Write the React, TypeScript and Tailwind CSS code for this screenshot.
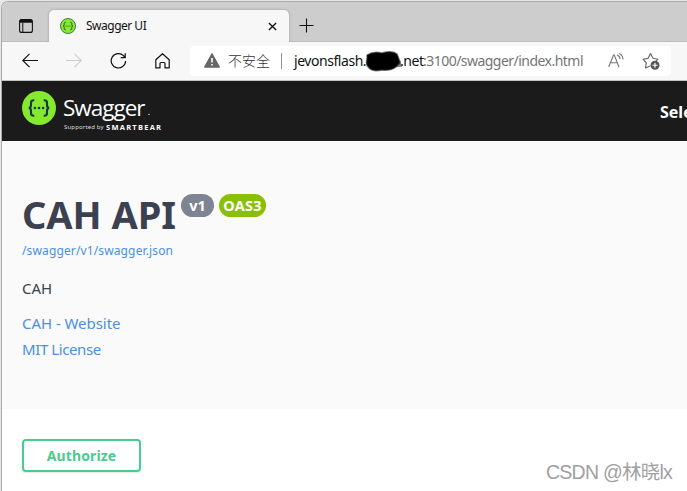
import React from 'react';

function SwaggerMark({ className, ring, ink }: { className: string; ring?: string; ink: string }) {
  return (
    <svg className={className} viewBox="0 0 34 34" fill="none">
      <circle cx="17" cy="17" r={ring ? 16 : 17} fill="#85ea2d" stroke={ring} strokeWidth={ring ? 2 : 0} />
      <path
        d="M12.3 9.2h-.8c-1.9 0-2.5.9-2.5 2.7v2.2c0 1.8-.6 2.8-2.2 2.9 1.6.1 2.2 1.1 2.2 2.9v2.2c0 1.8.6 2.7 2.5 2.7h.8M21.7 9.2h.8c1.9 0 2.5.9 2.5 2.7v2.2c0 1.8.6 2.8 2.2 2.9-1.6.1-2.2 1.1-2.2 2.9v2.2c0 1.8-.6 2.7-2.5 2.7h-.8"
        stroke={ink}
        strokeWidth="2.1"
      />
      <circle cx="12.9" cy="17" r="1.3" fill={ink} />
      <circle cx="17" cy="17" r="1.3" fill={ink} />
      <circle cx="21.1" cy="17" r="1.3" fill={ink} />
    </svg>
  );
}

function TabStrip() {
  return (
    <div className="flex h-[40px] shrink-0 bg-[#cdcdcd]">
      <div className="flex w-[47px] justify-center border-b border-[#bdbdbd] pt-[17px]">
        <svg className="h-[14px] w-[14px]" viewBox="0 0 14 14" fill="none" stroke="#111">
          <rect x=".6" y=".6" width="12.8" height="12.8" rx="2" strokeWidth="1.1" />
          <path d="M1 2.3h12" strokeWidth="3" />
          <path d="M3.8 3.5v10" />
        </svg>
      </div>
      <div className="mt-[8px] flex w-[240px] items-center rounded-t-[5px] bg-[#f7f7f7] shadow-[0_0_3px_rgba(0,0,0,0.25)] [clip-path:inset(-4px_-4px_0_-4px)]">
        <SwaggerMark className="ml-[11px] h-4 w-4" ring="#40734f" ink="#24513a" />
        <span className="ml-[10px] text-[12px] tracking-[-0.5px] text-[#111]">Swagger UI</span>
        <svg className="ml-auto mr-[12px] mt-px h-[9px] w-[9px]" viewBox="0 0 10 10" stroke="#111" strokeWidth="1.5">
          <path d="M1 1l8 8M9 1L1 9" />
        </svg>
      </div>
      <div className="flex flex-1 border-b border-[#bdbdbd] pl-[10px] pt-[16px]">
        <svg className="h-[15px] w-[15px]" viewBox="0 0 15 15" stroke="#111" strokeWidth="1.1">
          <path d="M.5 7.5h14M7.5.5v14" />
        </svg>
      </div>
    </div>
  );
}

function Toolbar() {
  return (
    <div className="flex h-[39px] shrink-0 border-b border-[#c4c4c4] bg-[#f7f7f7] text-[14px] leading-[30px]">
      <svg className="ml-[20px] mt-[11px] h-4 w-4 shrink-0" viewBox="0 0 16 16" fill="none" stroke="#111" strokeWidth="1.15">
        <path d="M16 7.5H.8M7.5.8L.8 7.5l6.7 6.7" />
      </svg>
      <svg className="ml-[28px] mt-[11px] h-4 w-4 shrink-0" viewBox="0 0 16 16" fill="none" stroke="#cecece" strokeWidth="1.15">
        <path d="M0 7.5h15.2M8.5.8l6.7 6.7-6.7 6.7" />
      </svg>
      <svg className="ml-[28px] mt-[10px] h-[18px] w-[17px] shrink-0" viewBox="0 0 17 18" fill="none" stroke="#111" strokeWidth="1.2">
        <path d="M15.6 9a7.2 7.2 0 1 1-2.1-5.3l1.7 1.6M15.2 1.2v4.4h-4.5" />
      </svg>
      <svg className="ml-[28px] mt-[11px] h-4 w-[15px] shrink-0" viewBox="0 0 15 16" fill="none" stroke="#111" strokeWidth="1.2" strokeLinejoin="round">
        <path d="M.8 6.7L7.5.7l6.7 6v8.2H10v-4.4c0-.6-.4-1-1-1H6c-.6 0-1 .4-1 1v4.4H.8z" />
      </svg>
      <div className="ml-[20px] mt-[4px] flex h-[30px] w-[481px] shrink-0 rounded-[4px] bg-white">
        <svg className="ml-[14px] mt-[7px] h-[15px] w-4 shrink-0" viewBox="0 0 16 15">
          <path d="M8 .7L15.3 14H.7z" fill="#666" stroke="#666" strokeWidth="1.3" strokeLinejoin="round" />
          <path d="M8 5v4.6M8 11v1.6" stroke="#fff" strokeWidth="1.6" />
        </svg>
        <span className="ml-[8px] w-[42px] whitespace-nowrap font-['Noto_Sans_CJK_SC',sans-serif] font-light leading-[28px] text-[#333]">不安全</span>
        <span className="ml-[11px] mt-[7px] h-4 w-px shrink-0 bg-[#909090]" />
        <span className="relative ml-[12px] w-[129px] shrink-0 whitespace-nowrap tracking-[-0.45px] text-[#111]">
          jevonsflash.f
          <svg className="absolute left-[71px] top-[4px] h-[23px] w-[38px]" viewBox="0 0 38 23">
            <path d="M30 17l5-8 2 8z" fill="#888" />
            <path d="M2 5Q8 1 17 3Q27 0 32 4Q34 8 35 13L31 17Q26 21 17 20Q8 22 4 18Q0 14 2 9z" fill="#000" stroke="#333" strokeOpacity=".6" strokeWidth="1.5" />
          </svg>
          <span className="absolute left-[106px] top-0 tracking-[-0.45px]">.net</span>
        </span>
        <span className="w-[160px] shrink-0 whitespace-nowrap tracking-[-0.53px] text-[#757575]">:3100/swagger/index.html</span>
        <svg className="ml-[25px] mt-[7px] h-4 w-4 shrink-0" viewBox="0 0 16 16" fill="none" stroke="#777" strokeWidth="1.1">
          <path d="M.7 14L5.5 2h.8L11 14M2.5 9.7h6.8M9 2q3 1.3 3 4M11.2.4Q15 2.3 15 6.6" />
        </svg>
        <svg className="ml-[18px] mt-[6px] h-[18px] w-[18px] shrink-0" viewBox="0 0 18 18" fill="none" stroke="#666" strokeWidth="1.15">
          <path d="M8 14L3.5 16l.8-5.2L1 7.2l5-.8L8.5 1.5 11 6.3l5 .9-2 2" strokeLinejoin="round" />
          <circle cx="13" cy="13.2" r="4.5" fill="#555" stroke="none" />
          <path d="M10.5 13.2h5M13 10.7v5" stroke="#fff" />
        </svg>
      </div>
    </div>
  );
}

function SwaggerHeader() {
  return (
    <div className="flex h-[60px] shrink-0 bg-[#1b1b1b] text-white">
      <SwaggerMark className="ml-[20px] mt-[10px] h-[34px] w-[34px] shrink-0" ink="#173647" />
      <div className="ml-[7px] w-[111px] whitespace-nowrap">
        <div className="mt-[13px] flex h-[27px] items-center">
          <span className="font-['Open_Sans',sans-serif] text-[22.5px] leading-[27px] tracking-[-1px]">Swagger</span>
          <span className="ml-[3px] mt-[13px] h-px w-[2px] bg-[#999]" />
        </div>
        <div className="mt-px flex h-[10px] items-center pl-px leading-[10px]">
          <span className="w-[42px] text-[6px] tracking-[0.15px] text-[#ddd]">Supported by</span>
          <span className="font-['Open_Sans',sans-serif] text-[7.5px] font-bold tracking-[1.25px]">SMARTBEAR</span>
        </div>
      </div>
      <span className="ml-auto mt-[19px] w-[27px] whitespace-nowrap text-[16px] font-bold leading-6">Sele</span>
    </div>
  );
}

function ApiInfo() {
  return (
    <div className="flex h-[268px] shrink-0 flex-col bg-[#fafafa] pl-[20px] text-[14px] text-[#3b4151]">
      <div className="mt-[52px] flex h-[48px] whitespace-nowrap font-bold">
        <h1 className="w-[155px] text-[38px] leading-[43px] tracking-[-0.05px]">CAH API</h1>
        <span className="ml-[4px] mt-px flex h-[23px] w-[33px] items-center justify-center rounded-full bg-[#7d8492] text-[14.5px] text-white">v1</span>
        <span className="ml-[5px] mt-px flex h-[23px] w-[47px] items-center justify-center rounded-full bg-[#89bf04] text-[14.5px] tracking-[0.2px] text-white">OAS3</span>
      </div>
      <a className="self-start text-[12px] leading-[20px] tracking-[0.13px] text-[#4990e2]">/swagger/v1/swagger.json</a>
      <p className="mt-[16px] text-[15px] leading-[22px]">CAH</p>
      <a className="mt-[13px] self-start text-[15px] leading-[22px] tracking-[-0.05px] text-[#4990e2]">CAH - Website</a>
      <a className="mt-[4px] self-start text-[15px] leading-[22px] tracking-[-0.4px] text-[#4990e2]">MIT License</a>
    </div>
  );
}

export default function App() {
  return (
    <div className="relative flex h-[491px] w-[687px] flex-col overflow-hidden bg-[#e6e6e6] pl-px pt-px font-['Noto_Sans',sans-serif]">
      <div className="flex flex-1 flex-col overflow-hidden rounded-tl-[7px] border-l border-t border-[#aaa] bg-white">
        <TabStrip />
        <Toolbar />
        <SwaggerHeader />
        <ApiInfo />
        <div className="flex-1 bg-white pl-[20px] pt-[30px]">
          <button className="h-[33px] w-[119px] rounded-[4px] border-2 border-[#49cc90] text-[14px] font-bold tracking-[0.1px] text-[#49cc90] shadow-[0_1px_2px_rgba(0,0,0,0.1)]">Authorize</button>
        </div>
      </div>
      <div className="absolute left-[546px] top-[459px] whitespace-nowrap font-['Liberation_Sans','Noto_Sans_CJK_SC',sans-serif] text-[19.5px] leading-[27px] tracking-[-0.75px] text-[#a0a0a0]">CSDN @林晓lx</div>
    </div>
  );
}
